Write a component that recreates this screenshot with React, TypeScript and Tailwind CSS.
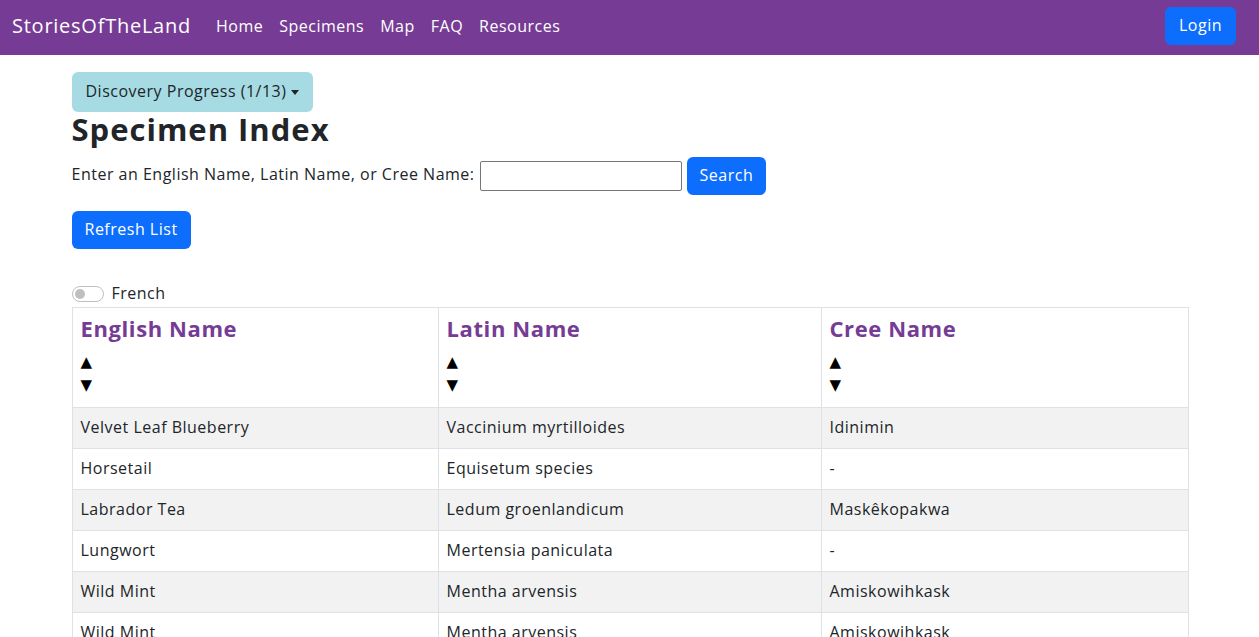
import React from "react";

const rows: [string, string, string][] = [
  ["Velvet Leaf Blueberry", "Vaccinium myrtilloides", "Idinimin"],
  ["Horsetail", "Equisetum species", "-"],
  ["Labrador Tea", "Ledum groenlandicum", "Maskêkopakwa"],
  ["Lungwort", "Mertensia paniculata", "-"],
  ["Wild Mint", "Mentha arvensis", "Amiskowihkask"],
  ["Wild Mint", "Mentha arvensis", "Amiskowihkask"],
];

function HeadCell({ label, w }: { label: string; w: string }) {
  return (
    <th className={`${w} border border-[#dee2e6] px-2 pt-[7px] pb-[10px] text-left align-top font-normal`}>
      <div className="text-[22px] font-bold leading-[26px] text-[#763c95] tracking-[0.6px]">{label}</div>
      <div className="mt-[10px] text-[15px] leading-[23px] text-black" style={{ fontFamily: '"DejaVu Sans", sans-serif' }}>▲</div>
      <div className="text-[15px] leading-[23px] text-black" style={{ fontFamily: '"DejaVu Sans", sans-serif' }}>▼</div>
    </th>
  );
}

export default function App() {
  return (
    <div className="min-h-[637px] bg-white text-[#212529] tracking-[0.5px]" style={{ fontFamily: '"Open Sans", "Noto Sans", sans-serif' }}>
      <nav className="flex h-[55px] items-center bg-[#763c95] pb-[3px] pl-3 pr-[23px]">
        <span className="text-[20px] tracking-[0.75px] text-white">StoriesOfTheLand</span>
        <div className="ml-[25px] flex items-center gap-4 text-[16px] text-white">
          <span>Home</span>
          <span>Specimens</span>
          <span>Map</span>
          <span>FAQ</span>
          <span>Resources</span>
        </div>
        <button className="ml-auto h-[38px] rounded-md bg-[#0d6efd] px-[14px] pb-[2px] text-[16px] text-white">Login</button>
      </nav>
      <main className="mx-auto max-w-[1140px] px-3 pt-[17px]">
        <button className="flex h-[40px] items-center gap-1 rounded-md bg-[#a6dbe3] px-[14px] pb-[2px] text-[16px] text-[#212529]">
          Discovery Progress (1/13)
          <span className="ml-[1px] mt-[2px] inline-block h-0 w-0 border-x-[4px] border-t-[5px] border-x-transparent border-t-[#212529]"></span>
        </button>
        <h1 className="mt-[-2px] text-[31px] font-bold leading-[38px] tracking-[1px] text-[#212529]">Specimen Index</h1>
        <div className="mt-[9px] flex items-center">
          <label className="pb-[4px] text-[16px]">Enter an English Name, Latin Name, or Cree Name:</label>
          <input className="ml-[5px] h-[30px] w-[202px] rounded-[2px] border border-[#767676]" />
          <button className="ml-[5px] h-[38px] rounded-md bg-[#0d6efd] px-[13px] pb-[2px] text-[16px] text-white">Search</button>
        </div>
        <button className="mt-4 h-[38px] rounded-md bg-[#0d6efd] px-[13px] pb-[2px] text-[16px] text-white">Refresh List</button>
        <div className="mt-[32px] flex h-[26px] items-center gap-2">
          <span className="relative inline-block h-[16px] w-[32px] rounded-full border border-[#bfbfbf] bg-white">
            <span className="absolute left-[2px] top-[2px] h-[10px] w-[10px] rounded-full bg-[#bfbfbf]"></span>
          </span>
          <span className="pb-[2px] text-[16px] leading-[24px]">French</span>
        </div>
        <table className="w-full table-fixed border-collapse text-[16px]">
          <thead>
            <tr>
              <HeadCell label="English Name" w="w-[366px]" />
              <HeadCell label="Latin Name" w="w-[383px]" />
              <HeadCell label="Cree Name" w="w-[367px]" />
            </tr>
          </thead>
          <tbody>
            {rows.map((r, i) => (
              <tr key={i} className={i % 2 === 0 ? "bg-[#f2f2f2]" : "bg-white"}>
                {r.map((c, j) => (
                  <td key={j} className="border border-[#dee2e6] px-2 pt-[7px] pb-[9px] leading-[24px]">{c}</td>
                ))}
              </tr>
            ))}
          </tbody>
        </table>
      </main>
    </div>
  );
}
